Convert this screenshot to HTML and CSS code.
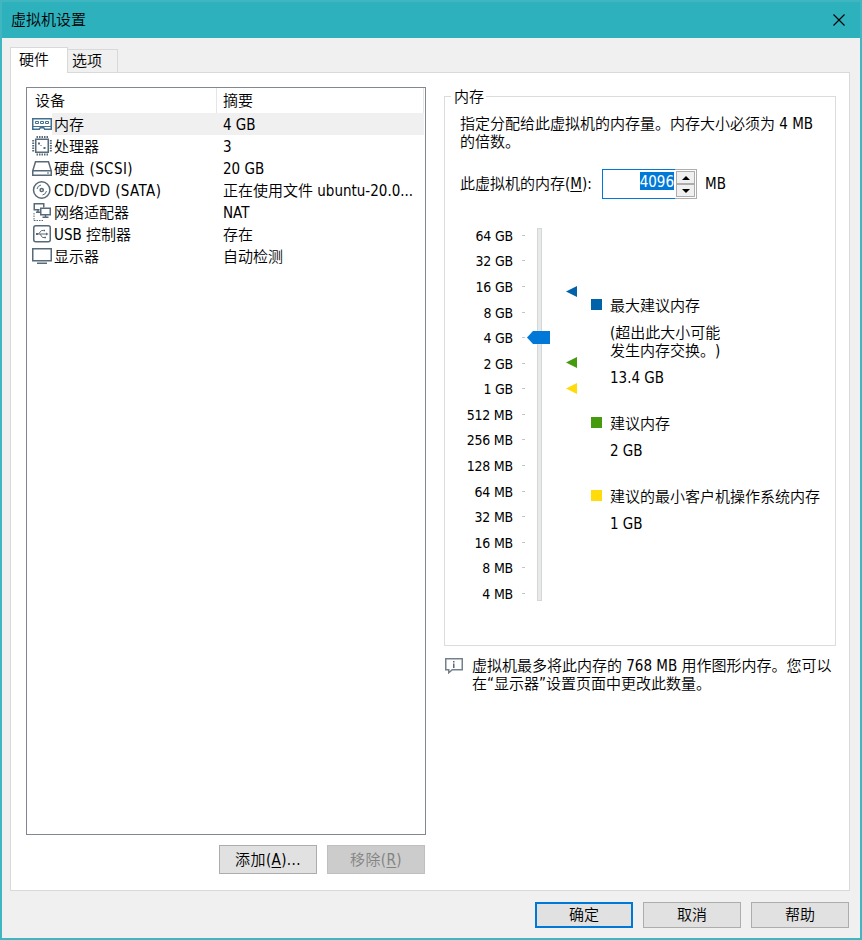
FILE: index.html
```html
<!DOCTYPE html>
<html lang="zh-CN">
<head>
  <meta charset="utf-8">
  <meta name="viewport" content="width=device-width, initial-scale=1">
  <title>虚拟机设置</title>
  <link rel="stylesheet" href="styles.css">
</head>
<body>
<div class="window">
  <div class="titlebar">
    <span class="titlebar__text">虚拟机设置</span>
    <svg class="titlebar__close" width="12" height="12" viewBox="0 0 12 12"><path d="M0.5 0.5l11 11M11.5 0.5l-11 11"/></svg>
  </div>
  <div class="tabs">
    <div class="tabs__link tabs__link_active">硬件</div>
    <div class="tabs__link">选项</div>
  </div>
  <div class="pane">
    <div class="left">
      <div class="list">
        <div class="list__head">
          <span class="list__name">设备</span>
          <span class="list__info">摘要</span>
        </div>
        <div class="list__row list__row_active">
          <svg class="icon" width="20" height="22" viewBox="0 0 20 22"><path class="blue" d="M.75 5.750h18.500v10.500h-6.500l-1-1.500h-3.500l-1 1.500h-6.500z"/><path class="blue thin" d="M1 13.500h18M3.500 8.500h3v2h-3zM8.500 8.500h3v2h-3zM13.500 8.500h3v2h-3z"/></svg>
          <span class="list__name">内存</span><span class="list__info">4 GB</span>
        </div>
        <div class="list__row">
          <svg class="icon" width="20" height="22" viewBox="0 0 20 22"><path d="M3.750 4.250h12.500v13h-12.500z"/><path class="dash" d="M4.500 2h11.500M4.500 19.500h11.500M1.200 5v12M18.800 5v12"/><path class="fill" d="M6 7.500h2v2h-2zM11.500 12h2v2h-2zM8.500 10h1v1h-1z"/></svg>
          <span class="list__name">处理器</span><span class="list__info">3</span>
        </div>
        <div class="list__row">
          <svg class="icon" width="20" height="22" viewBox="0 0 20 22"><path d="M3.500 4.750h13l2.750 9v4.500h-18.500v-4.500zM1 13.750h18"/><path class="thin" d="M15 16h2"/></svg>
          <span class="list__name list__name_scsi">硬盘 (SCSI)</span><span class="list__info">20 GB</span>
        </div>
        <div class="list__row">
          <svg class="icon" width="20" height="22" viewBox="0 0 20 22"><circle cx="9.700" cy="11" r="8.200"/><circle cx="9.700" cy="11" r="1.600"/><path class="thin" d="M5 10a5 5 0 0 1 4-4M14.500 12a5 5 0 0 1-4 4"/></svg>
          <span class="list__name list__name_wide">CD/DVD (SATA)</span><span class="list__info">正在使用文件 ubuntu-20.0...</span>
        </div>
        <div class="list__row">
          <svg class="icon" width="20" height="22" viewBox="0 0 20 22"><path d="M7.500 8.750h-5.250v-6h9.500v3.500M4 11.250h4M6 9v2M8.750 7.250h9.500v6.500h-9.500zM13.500 14v2M10.500 16.250h6"/><path class="dash thin" d="M2 12v8M2 19.500h10"/></svg>
          <span class="list__name">网络适配器</span><span class="list__info">NAT</span>
        </div>
        <div class="list__row">
          <svg class="icon" width="20" height="22" viewBox="0 0 20 22"><rect x="1.750" y="2.750" width="16.500" height="16" rx="2"/><path class="thin" d="M4 11h11M6.500 11l3-3.500h2M8 11l2.500 3.500h2.500"/><path class="fill" d="M4 10h2v2h-2zM11.500 6.800h1.500v1.500h-1.500zM12.500 13.700h1.500v1.500h-1.500zM14 9.500l2.500 1.500l-2.500 1.500z"/></svg>
          <span class="list__name">USB 控制器</span><span class="list__info">存在</span>
        </div>
        <div class="list__row">
          <svg class="icon" width="20" height="22" viewBox="0 0 20 22"><path d="M.75 3.750h18.500v12h-18.500z"/><path d="M5 18.250h10"/></svg>
          <span class="list__name">显示器</span><span class="list__info">自动检测</span>
        </div>
      </div>
      <div class="left__buttons">
        <div class="btn btn_tall">添加(<u>A</u>)...</div>
        <div class="btn btn_tall btn_disabled">移除(<u>R</u>)</div>
      </div>
    </div>

    <div class="right">
      <div class="group">
        <div class="group__title"><span>内存</span></div>
        <p class="group__text">指定分配给此虚拟机的内存量。内存大小必须为 4 MB<br>的倍数。</p>
        <div class="size">
          <span class="size__label">此虚拟机的内存(<u>M</u>):</span>
          <div class="spin">
            <div class="spin__field"><span class="spin__value">4096</span></div>
            <div class="spin__arrows">
              <div class="spin__arrow"><svg width="8" height="4" viewBox="0 0 8 4"><path d="M0 4l4-4l4 4z"/></svg></div>
              <div class="spin__arrow"><svg width="8" height="4" viewBox="0 0 8 4"><path d="M0 0l4 4l4-4z"/></svg></div>
            </div>
          </div>
          <span>MB</span>
        </div>
        <div class="memory">
          <div class="scale">
            <div class="scale__item">64 GB</div>
            <div class="scale__item">32 GB</div>
            <div class="scale__item">16 GB</div>
            <div class="scale__item">8 GB</div>
            <div class="scale__item">4 GB</div>
            <div class="scale__item">2 GB</div>
            <div class="scale__item">1 GB</div>
            <div class="scale__item">512 MB</div>
            <div class="scale__item">256 MB</div>
            <div class="scale__item">128 MB</div>
            <div class="scale__item">64 MB</div>
            <div class="scale__item">32 MB</div>
            <div class="scale__item">16 MB</div>
            <div class="scale__item">8 MB</div>
            <div class="scale__item">4 MB</div>
          </div>
          <div class="track">
            <svg class="track__thumb" width="23" height="13" viewBox="0 0 23 13"><path d="M0 6.500l6-6.500h17v13h-17z"/></svg>
            <svg class="mark mark_max" width="11" height="11" viewBox="0 0 11 11"><path d="M0 5.500l11-5.500v11z"/></svg>
            <svg class="mark mark_rec" width="11" height="11" viewBox="0 0 11 11"><path d="M0 5.500l11-5.500v11z"/></svg>
            <svg class="mark mark_min" width="11" height="11" viewBox="0 0 11 11"><path d="M0 5.500l11-5.500v11z"/></svg>
          </div>
          <div class="legend">
            <div class="legend__item legend__item_max">
              <p>最大建议内存</p>
              <p>(超出此大小可能<br>发生内存交换。)</p>
              <p>13.4 GB</p>
            </div>
            <div class="legend__item legend__item_rec">
              <p>建议内存</p>
              <p>2 GB</p>
            </div>
            <div class="legend__item legend__item_min">
              <p>建议的最小客户机操作系统内存</p>
              <p>1 GB</p>
            </div>
          </div>
        </div>
      </div>
      <div class="note">
        <svg class="note__icon" width="18" height="16" viewBox="0 0 18 16"><path d="M.75 .75h16.500v11h-10l-3.500 3v-3h-3z"/><path class="fill" d="M8 3h1.500v1.500h-1.500zM8 5.500h1.500v4.500h-1.500z"/></svg>
        <p>虚拟机最多将此内存的 768 MB 用作图形内存。您可以<br>在“显示器”设置页面中更改此数量。</p>
      </div>
    </div>
  </div>
  <div class="footer">
    <div class="btn btn_default">确定</div>
    <div class="btn">取消</div>
    <div class="btn">帮助</div>
  </div>
</div>
</body>
</html>
```
FILE: styles.css
```css
* {
  box-sizing: border-box;
}
body {
  margin: 0;
  font: 350 15px/18px "DejaVu Sans Condensed", "Noto Sans CJK SC", sans-serif;
  text-spacing-trim: space-all;
  color: #000;
}
p {
  margin: 0;
}
u {
  text-underline-offset: 2px;
}
.window {
  width: 862px;
  height: 940px;
  display: flex;
  flex-direction: column;
  background: #f0f0f0;
  border: 2px solid #40b6c1;
}
.titlebar {
  height: 36px;
  flex: none;
  display: flex;
  justify-content: space-between;
  align-items: center;
  padding: 0 15px 1px 9px;
  background: #2cb1bd;
}
.titlebar__close {
  fill: none;
  stroke: #000;
  stroke-width: 1.1;
}
.tabs {
  display: flex;
  align-items: flex-end;
  height: 34px;
  padding-left: 8px;
  flex: none;
}
.tabs__link {
  height: 23px;
  width: 50px;
  padding: 2px 0 0 4px;
  border: 1px solid #d9d9d9;
  border-width: 1px 1px 0 0;
}
.tabs__link_active {
  position: relative;
  width: 58px;
  height: 26px;
  padding: 3px 0 0 8px;
  margin-bottom: -1px;
  background: #fff;
  border-left-width: 1px;
}
.pane {
  display: flex;
  width: 840px;
  height: 819px;
  flex: none;
  margin-left: 8px;
  padding: 14px 13px 0 15px;
  background: #fff;
  border: 1px solid #d9d9d9;
}
.left {
  width: 400px;
}
.list {
  height: 748px;
  border: 1px solid #828790;
}
.list__head {
  display: flex;
  height: 25px;
  margin-right: 1px;
  padding-left: 8px;
  line-height: 26px;
  border-right: 1px solid #e5e5e5;
}
.list__head .list__name {
  width: 182px;
  padding-left: 0;
  border-right: 1px solid #e5e5e5;
}
.list__head .list__info {
  padding-left: 6px;
}
.list__row {
  display: flex;
  height: 22px;
  padding-left: 5px;
  line-height: 24px;
  margin-right: 1px;
  white-space: nowrap;
}
.list__row_active {
  background: linear-gradient(90deg, #fff 25px, #f0f0f0 25px);
}
.list__name {
  width: 171px;
  padding-left: 2px;
}
.list__name_scsi,
.list__name_wide {
  letter-spacing: 0.4px;
}
.icon {
  flex: none;
  fill: none;
  stroke: #586977;
  stroke-width: 1.5;
}
.icon .blue {
  stroke: #43708f;
}
.icon .dash {
  stroke-width: 2;
  stroke-dasharray: 1.5 1;
}
.icon .thin {
  stroke-width: 1;
}
.icon .fill,
.note__icon .fill {
  fill: #586977;
  stroke: none;
}
.left__buttons {
  display: flex;
  justify-content: flex-end;
  gap: 10px;
  padding: 10px 1px 0 0;
}
.btn {
  width: 98px;
  height: 26px;
  line-height: 24px;
  text-align: center;
  background: #e1e1e1;
  border: 1px solid #adadad;
}
.btn_tall {
  height: 29px;
  line-height: 28px;
  letter-spacing: 0.4px;
}
.btn_disabled {
  color: #838383;
  background: #ccc;
  border-color: #bfbfbf;
}
.btn_default {
  border: 2px solid #0078d7;
  line-height: 22px;
}
.right {
  width: 392px;
  margin-left: 18px;
  padding-top: 9px;
}
.group {
  height: 550px;
  padding: 0 0 0 15px;
  border: 1px solid #dcdcdc;
}
.group__title {
  height: 18px;
  margin: -9px 0 0 -9px;
}
.group__title span {
  padding: 0 2px 0 3px;
  background: #fff;
}
.group__text {
  margin-top: 9px;
}
.size {
  display: flex;
  align-items: center;
  margin-top: 18px;
}
.size__label {
  width: 142px;
  white-space: nowrap;
}
.spin {
  display: flex;
  width: 95px;
  height: 30px;
  margin-right: 8px;
}
.spin__field {
  width: 73px;
  padding: 2px 1px 0 0;
  text-align: right;
  border: 1px solid #0078d7;
  border-right: 0;
}
.spin__value {
  display: inline-block;
  height: 18px;
  line-height: 20px;
  color: #fff;
  background: #0078d7;
}
.spin__arrows {
  width: 22px;
  padding: 1px;
  border: 1px solid #adadad;
  border-left: 0;
}
.spin__arrow {
  display: flex;
  align-items: center;
  justify-content: center;
  height: 13px;
  background: #f0f0f0;
  border: 1px solid #adadad;
}
.memory {
  display: flex;
  margin-top: 24px;
}
.scale {
  width: 65px;
  height: 383.6px;
  display: flex;
  flex-direction: column;
}
.scale__item {
  flex: 1;
  display: flex;
  align-items: center;
  justify-content: flex-end;
  font-size: 14px;
  letter-spacing: -0.2px;
}
.scale__item::after {
  content: "";
  width: 3px;
  height: 1px;
  margin: 0 0 1px 9px;
  background: #c4c4c4;
}
.track {
  position: relative;
  width: 5px;
  height: 373px;
  margin: 5px 0 0 12px;
  background: #e7eaea;
  border: 1px solid #d6d6d6;
}
.track__thumb {
  position: absolute;
  left: -11px;
  top: 102px;
  fill: #0078d7;
}
.mark {
  position: absolute;
  left: 28px;
}
.mark_max {
  top: 57px;
  fill: #0063aa;
}
.mark_rec {
  top: 128px;
  fill: #459a0d;
}
.mark_min {
  top: 154px;
  fill: #ffdb0c;
}
.legend {
  margin: 74px 0 0 49px;
  white-space: nowrap;
}
.legend__item {
  padding-left: 19px;
  margin-bottom: 28px;
  background: no-repeat 0 2px / 11px 11px;
}
.legend__item p {
  margin-bottom: 9px;
}
.legend__item_max {
  background-image: linear-gradient(#0063aa, #0063aa);
}
.legend__item_rec {
  background-image: linear-gradient(#459a0d, #459a0d);
}
.legend__item_min {
  background-image: linear-gradient(#ffdb0c, #ffdb0c);
}
.note {
  display: flex;
  gap: 9px;
  padding-top: 11px;
  white-space: nowrap;
}
.note__icon {
  flex: none;
  margin: 1px 0 0 1px;
  fill: none;
  stroke: #74818c;
  stroke-width: 1.5;
}
.footer {
  display: flex;
  justify-content: flex-end;
  gap: 10px;
  padding: 11px 11px 0 0;
}
```
